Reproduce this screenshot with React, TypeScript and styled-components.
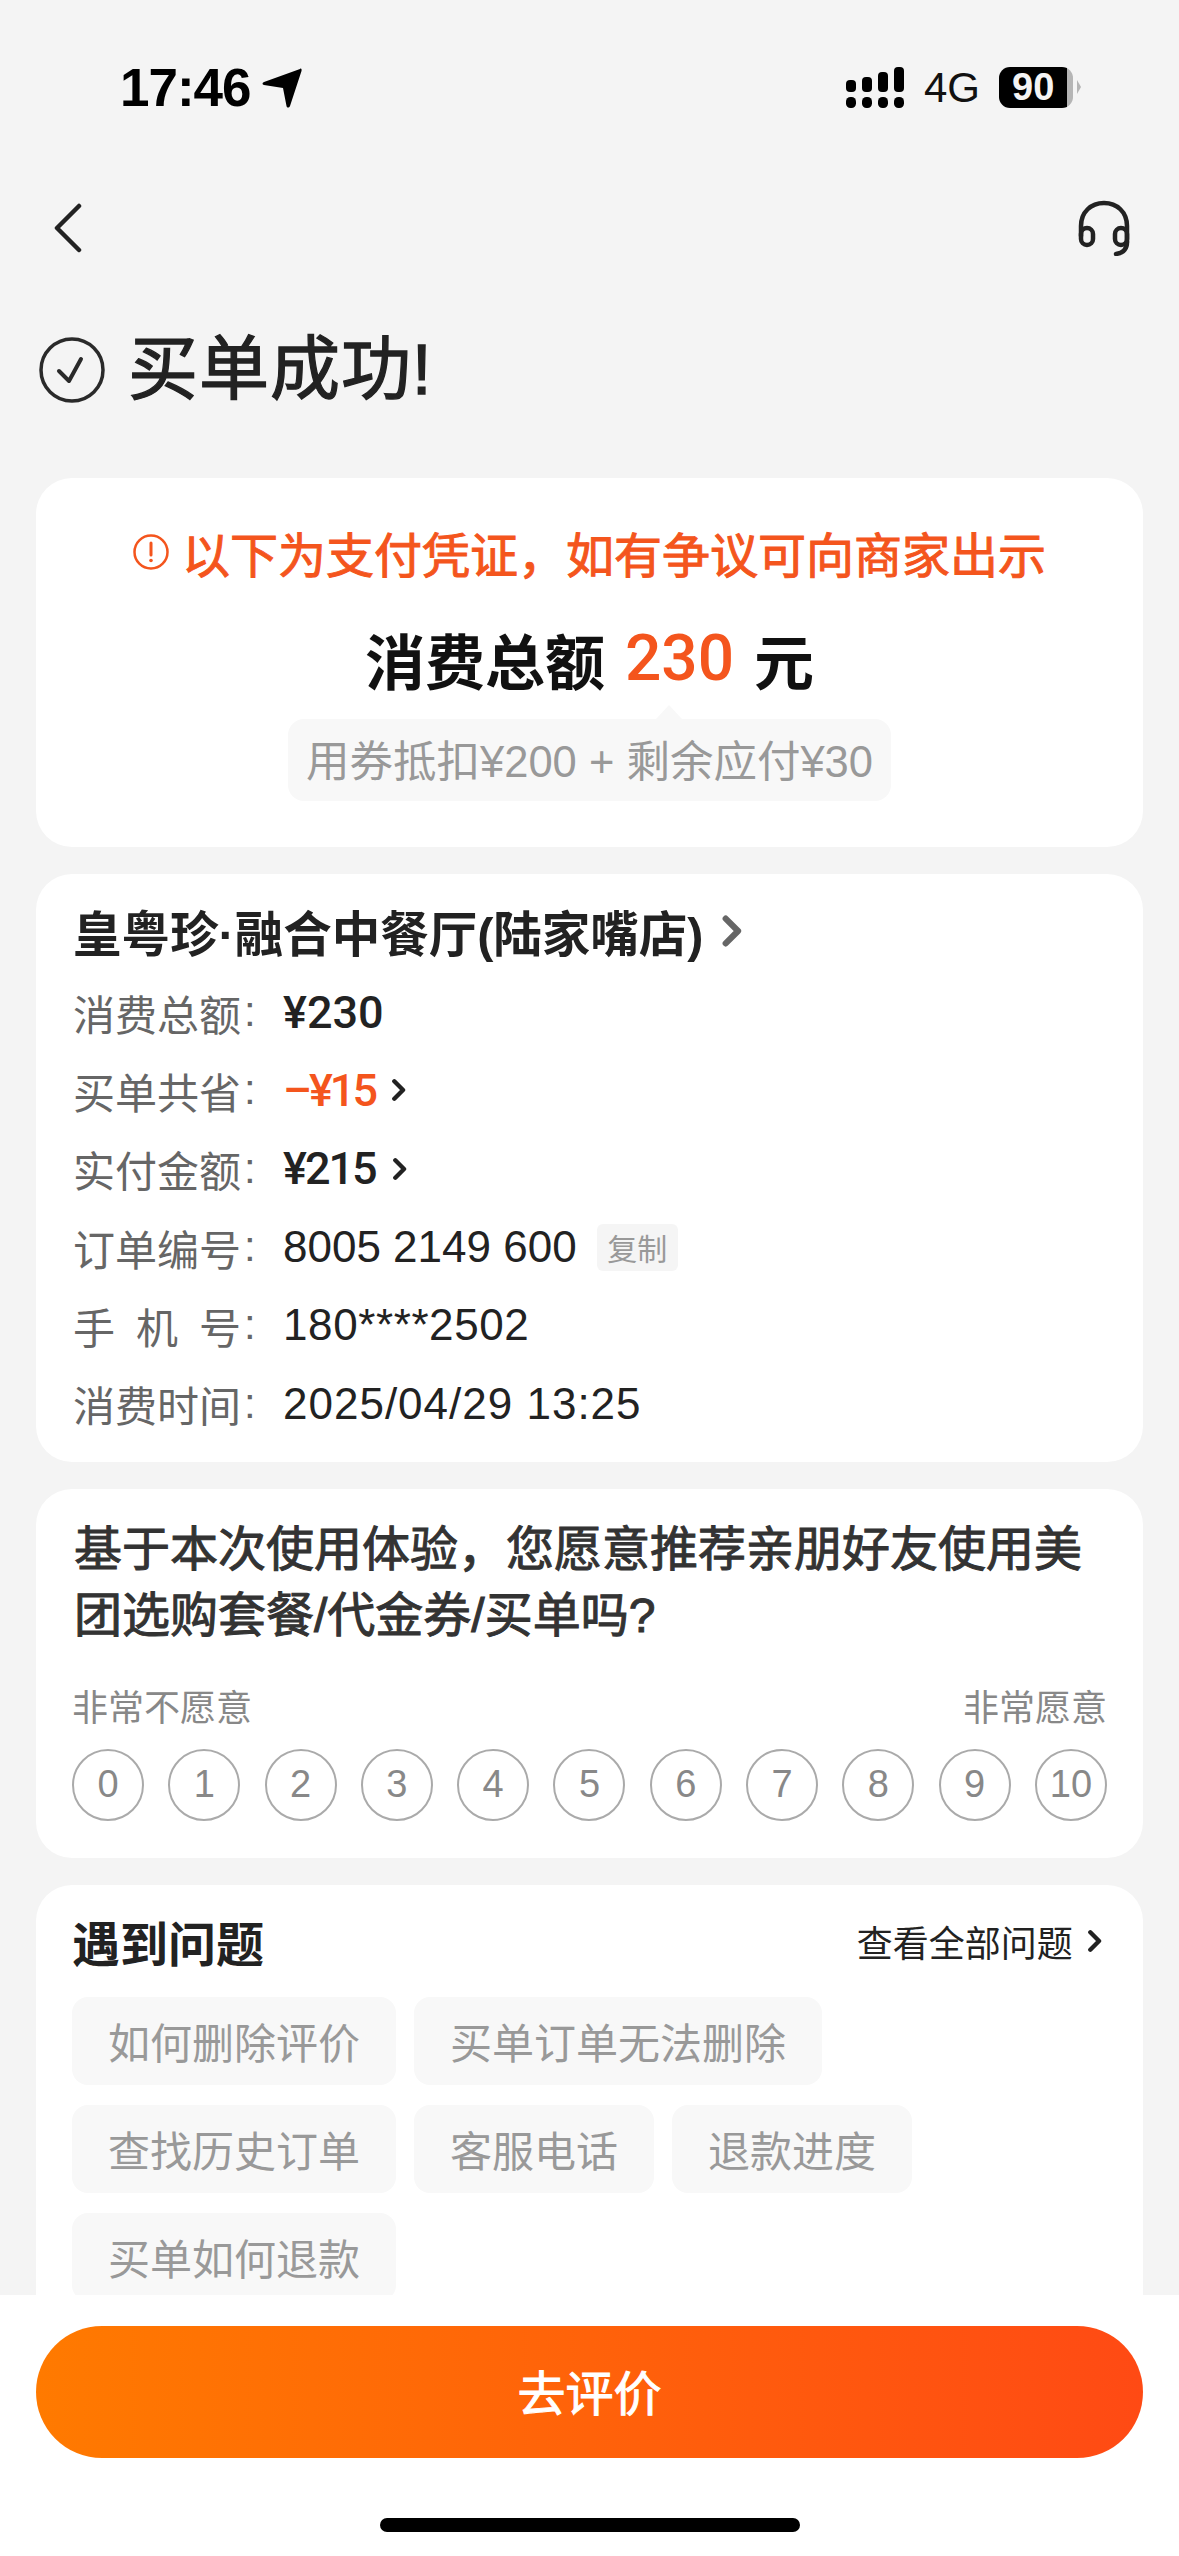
import React from "react";
import styled, { createGlobalStyle } from "styled-components";

const FONT = `"Liberation Sans", "Noto Sans CJK SC", sans-serif`;
const MEDIUM_FONT = `Roboto, "Noto Sans CJK SC", sans-serif`;
const ORANGE = "#f4551d";

const GlobalStyle = createGlobalStyle`
  html, body {
    margin: 0;
    padding: 0;
    background: #f4f4f4;
    font-family: ${FONT};
  }
  * {
    box-sizing: border-box;
  }
`;

const Page = styled.div`
  position: relative;
  width: 1179px;
  height: 2556px;
  overflow: hidden;
  background: #f4f4f4;
  color: #222;
`;

const StatusBar = styled.div`
  display: flex;
  align-items: center;
  justify-content: space-between;
  height: 41px;
  margin-top: 67px;
  padding: 0 106px 0 120px;
`;

const StatusGroup = styled.div`
  display: flex;
  align-items: center;
`;

const Clock = styled.span`
  font-size: 53px;
  font-weight: 700;
  line-height: 41px;
  color: #000;
  letter-spacing: -1px;
`;

const Network = styled.span`
  margin: 0 19px 0 20px;
  font-size: 42px;
  line-height: 41px;
  color: #111;
`;

const Battery = styled.div`
  position: relative;
  width: 74px;
  height: 41px;
  border-radius: 11px;
  background: linear-gradient(90deg, #000 92%, #b5b5b5 92%);
  color: #f4f4f4;
  font-size: 38px;
  font-weight: 700;
  line-height: 41px;
  padding-left: 13px;

  &::after {
    content: "";
    position: absolute;
    right: -8px;
    top: 13px;
    border-left: 4px solid #b5b5b5;
    border-top: 7px solid transparent;
    border-bottom: 7px solid transparent;
  }
`;

const NavBar = styled.div`
  display: flex;
  align-items: center;
  justify-content: space-between;
  height: 60px;
  margin-top: 90px;
  padding: 0 49px 0 54px;
`;

const TitleRow = styled.div`
  display: flex;
  align-items: center;
  gap: 23px;
  height: 80px;
  margin-top: 72px;
  padding-left: 39px;
`;

const Title = styled.h1`
  margin: 0;
  font-size: 70px;
  font-weight: 400;
  line-height: 80px;
  letter-spacing: 1px;
  color: #222;
  -webkit-text-stroke: 1.3px #222;
`;

const Cards = styled.div`
  display: flex;
  flex-direction: column;
  gap: 27px;
  margin-top: 68px;
  padding: 0 36px;
`;

const Card = styled.section`
  background: #fff;
  border-radius: 36px;
`;

const ProofCard = styled(Card)`
  display: flex;
  flex-direction: column;
  align-items: center;
  height: 369px;
  padding-top: 48px;
`;

const Notice = styled.div`
  display: flex;
  align-items: center;
  gap: 13px;
  height: 52px;
  font-size: 48px;
  font-weight: 400;
  color: ${ORANGE};
  -webkit-text-stroke: 1px ${ORANGE};
`;

const Total = styled.div`
  display: flex;
  align-items: center;
  gap: 20px;
  height: 80px;
  margin-top: 40px;
  font-size: 60px;
  font-weight: 700;
  color: #111;
`;

const TotalAmount = styled.span`
  color: ${ORANGE};
  font-family: ${MEDIUM_FONT};
  font-size: 64px;
  font-weight: 500;
`;

const Breakdown = styled.div`
  position: relative;
  display: flex;
  align-items: center;
  height: 82px;
  margin-top: 21px;
  padding: 0 18px 3px;
  border-radius: 16px;
  background: #f8f8f8;
  font-size: 43.5px;
  color: #999;

  &::before {
    content: "";
    position: absolute;
    top: -14px;
    left: 368px;
    border-bottom: 14px solid #f8f8f8;
    border-left: 13px solid transparent;
    border-right: 13px solid transparent;
  }
`;

const OrderCard = styled(Card)`
  padding: 24px 36px 19px;
`;

const ShopName = styled.div`
  display: flex;
  align-items: center;
  gap: 18px;
  height: 66px;
  margin-bottom: 9px;
  padding-left: 1px;
  font-size: 48.5px;
  font-weight: 700;
  color: #222;
`;

const InfoRow = styled.div`
  display: flex;
  align-items: center;
  height: 78.3px;
  padding-left: 1px;
`;

const InfoLabel = styled.span`
  width: 168px;
  font-size: 42px;
  color: #666;
  white-space: nowrap;
  text-align-last: justify;
`;

const InfoColon = styled.span`
  width: 42px;
  padding-left: 3px;
  font-size: 42px;
  color: #666;
`;

const InfoValue = styled.span<{ $track?: number }>`
  font-size: 44px;
  color: #222;
  letter-spacing: ${p => p.$track ?? 0}px;
`;

const StrongValue = styled.span<{ $accent?: boolean; $track?: number }>`
  font-family: ${MEDIUM_FONT};
  font-size: 45px;
  font-weight: 500;
  color: ${p => (p.$accent ? ORANGE : "#222")};
  letter-spacing: ${p => p.$track ?? 0}px;
`;

const RowChevron = styled.span`
  display: flex;
  margin-left: 16px;
`;

const CopyTag = styled.span`
  display: flex;
  align-items: center;
  justify-content: center;
  width: 81px;
  height: 47px;
  margin-left: 20px;
  border-radius: 6px;
  background: #f5f5f5;
  font-size: 30px;
  color: #999;
`;

const SurveyCard = styled(Card)`
  height: 369px;
  padding: 28px 36px 0;
`;

const Question = styled.div`
  padding: 0 2px;
  font-size: 48px;
  font-weight: 400;
  line-height: 66px;
  color: #333;
  -webkit-text-stroke: 1px #333;
`;

const ScaleLabels = styled.div`
  display: flex;
  justify-content: space-between;
  margin-top: 35px;
  font-size: 36px;
  line-height: 50px;
  color: #888;
`;

const ScaleRow = styled.div`
  display: flex;
  justify-content: space-between;
  margin-top: 15px;
`;

const ScaleDot = styled.div`
  display: flex;
  align-items: center;
  justify-content: center;
  width: 72px;
  height: 72px;
  border: 2.5px solid #aaa;
  border-radius: 50%;
  font-size: 38px;
  color: #888;
`;

const HelpCard = styled(Card)`
  height: 500px;
  padding: 26px 36px 0;
`;

const HelpHeader = styled.div`
  display: flex;
  align-items: center;
  justify-content: space-between;
  height: 60px;
`;

const HelpTitle = styled.h2`
  margin: 0;
  font-size: 48px;
  font-weight: 700;
  color: #222;
`;

const AllLink = styled.div`
  display: flex;
  align-items: center;
  gap: 14px;
  padding-right: 5px;
  font-size: 36px;
  color: #222;
`;

const Topics = styled.div`
  display: flex;
  flex-direction: column;
  gap: 20px;
  margin-top: 26px;
`;

const TopicRow = styled.div`
  display: flex;
  gap: 18px;
`;

const Topic = styled.div`
  display: flex;
  align-items: center;
  height: 88px;
  padding: 0 36px;
  border-radius: 16px;
  background: #f8f8f8;
  font-size: 42px;
  color: #999;
`;

const BottomBar = styled.div`
  position: absolute;
  left: 0;
  right: 0;
  bottom: 0;
  height: 261px;
  padding: 31px 36px 0;
  background: #fff;
`;

const ReviewButton = styled.button`
  display: block;
  width: 100%;
  height: 132px;
  padding: 0 0 4px;
  border: 0;
  border-radius: 66px;
  background: linear-gradient(90deg, #ff7a00 0%, #ff4a14 100%);
  color: #fff;
  font-family: ${FONT};
  font-size: 48px;
  font-weight: 400;
  -webkit-text-stroke: 1px #fff;
`;

const HomeIndicator = styled.div`
  width: 420px;
  height: 14px;
  margin: 60px auto 0;
  border-radius: 7px;
  background: #000;
`;

const LocationIcon = () => (
  <svg width="40" height="40" viewBox="0 0 40 40" style={{ marginLeft: 11 }}>
    <path d="M38 1 C39 0 40 1 39.5 3 L28 38 C27 40 25 40 24.5 38 L21 20 L2 17 C0 16.500 0 15 2 14 Z" fill="#000" />
  </svg>
);

const SignalIcon = () => (
  <svg width="58" height="41" viewBox="0 0 58 41" fill="#000">
    <rect x="0" y="13" width="10" height="12" rx="4" />
    <rect x="16" y="10" width="10" height="15" rx="4" />
    <rect x="32" y="5" width="10" height="20" rx="4" />
    <rect x="48" y="0" width="10" height="25" rx="4" />
    <rect x="0" y="30" width="10" height="11" rx="4.500" />
    <rect x="16" y="30" width="10" height="11" rx="4.500" />
    <rect x="32" y="30" width="10" height="11" rx="4.500" />
    <rect x="48" y="30" width="10" height="11" rx="4.500" />
  </svg>
);

const BackIcon = () => (
  <svg width="28" height="50" viewBox="0 0 28 50" fill="none" stroke="#222" strokeWidth="4.500" strokeLinecap="round" strokeLinejoin="round">
    <path d="M25 3 L3 25 L25 47" />
  </svg>
);

const HeadsetIcon = () => (
  <svg width="52" height="56" viewBox="0 0 52 56" fill="none" stroke="#222" strokeWidth="4.500" strokeLinecap="round">
    <path d="M3 36 V26 C3 12 13 3 26 3 C39 3 49 12 49 26 V42" />
    <rect x="3" y="28" width="12" height="17" rx="6" />
    <rect x="37" y="28" width="12" height="17" rx="6" />
    <path d="M49 42 C49 49 45 53 38 54" />
  </svg>
);

const SuccessIcon = () => (
  <svg width="66" height="66" viewBox="0 0 66 66" fill="none" stroke="#2a2a2a" strokeLinecap="round" strokeLinejoin="round">
    <circle cx="33" cy="33" r="31" strokeWidth="3.500" />
    <path d="M20 34 L30 44 L42 22" strokeWidth="4" />
  </svg>
);

const NoticeIcon = () => (
  <svg width="36" height="36" viewBox="0 0 36 36" fill="none" stroke={ORANGE} strokeWidth="2.500">
    <circle cx="18" cy="18" r="16.500" />
    <path d="M18 9 V21" strokeLinecap="round" strokeWidth="3" />
    <circle cx="18" cy="26.500" r="1.800" fill={ORANGE} stroke="none" />
  </svg>
);

const Chevron = ({ color = "#222", size = 24, weight = 4 }: { color?: string; size?: number; weight?: number }) => (
  <svg width={size * 0.64} height={size} viewBox="0 0 14 22" fill="none" stroke={color} strokeWidth={weight} strokeLinecap="round" strokeLinejoin="round">
    <path d="M3 3 L11 11 L3 19" />
  </svg>
);

const SCORES = [0, 1, 2, 3, 4, 5, 6, 7, 8, 9, 10];

const TOPIC_ROWS = [
  ["如何删除评价", "买单订单无法删除"],
  ["查找历史订单", "客服电话", "退款进度"],
  ["买单如何退款"],
];

export default function App() {
  return (
    <Page>
      <GlobalStyle />
      <StatusBar>
        <StatusGroup>
          <Clock>17:46</Clock>
          <LocationIcon />
        </StatusGroup>
        <StatusGroup>
          <SignalIcon />
          <Network>4G</Network>
          <Battery>90</Battery>
        </StatusGroup>
      </StatusBar>

      <NavBar>
        <BackIcon />
        <HeadsetIcon />
      </NavBar>

      <TitleRow>
        <SuccessIcon />
        <Title>买单成功!</Title>
      </TitleRow>

      <Cards>
        <ProofCard>
          <Notice>
            <NoticeIcon />
            以下为支付凭证，如有争议可向商家出示
          </Notice>
          <Total>
            消费总额
            <TotalAmount>230</TotalAmount>
            元
          </Total>
          <Breakdown>用券抵扣¥200 + 剩余应付¥30</Breakdown>
        </ProofCard>

        <OrderCard>
          <ShopName>
            皇粤珍·融合中餐厅(陆家嘴店)
            <Chevron color="#666" size={34} weight={4} />
          </ShopName>
          <InfoRow>
            <InfoLabel>消费总额</InfoLabel>
            <InfoColon>:</InfoColon>
            <StrongValue>¥230</StrongValue>
          </InfoRow>
          <InfoRow>
            <InfoLabel>买单共省</InfoLabel>
            <InfoColon>:</InfoColon>
            <StrongValue $accent $track={-3}>–¥15</StrongValue>
            <RowChevron><Chevron /></RowChevron>
          </InfoRow>
          <InfoRow>
            <InfoLabel>实付金额</InfoLabel>
            <InfoColon>:</InfoColon>
            <StrongValue $track={-2}>¥215</StrongValue>
            <RowChevron><Chevron /></RowChevron>
          </InfoRow>
          <InfoRow>
            <InfoLabel>订单编号</InfoLabel>
            <InfoColon>:</InfoColon>
            <InfoValue>8005 2149 600</InfoValue>
            <CopyTag>复制</CopyTag>
          </InfoRow>
          <InfoRow>
            <InfoLabel>手 机 号</InfoLabel>
            <InfoColon>:</InfoColon>
            <InfoValue $track={0.6}>180****2502</InfoValue>
          </InfoRow>
          <InfoRow>
            <InfoLabel>消费时间</InfoLabel>
            <InfoColon>:</InfoColon>
            <InfoValue $track={1}>2025/04/29 13:25</InfoValue>
          </InfoRow>
        </OrderCard>

        <SurveyCard>
          <Question>基于本次使用体验，您愿意推荐亲朋好友使用美团选购套餐/代金券/买单吗?</Question>
          <ScaleLabels>
            <span>非常不愿意</span>
            <span>非常愿意</span>
          </ScaleLabels>
          <ScaleRow>
            {SCORES.map(score => (
              <ScaleDot key={score}>{score}</ScaleDot>
            ))}
          </ScaleRow>
        </SurveyCard>

        <HelpCard>
          <HelpHeader>
            <HelpTitle>遇到问题</HelpTitle>
            <AllLink>
              查看全部问题
              <Chevron />
            </AllLink>
          </HelpHeader>
          <Topics>
            {TOPIC_ROWS.map(row => (
              <TopicRow key={row[0]}>
                {row.map(topic => (
                  <Topic key={topic}>{topic}</Topic>
                ))}
              </TopicRow>
            ))}
          </Topics>
        </HelpCard>
      </Cards>

      <BottomBar>
        <ReviewButton>去评价</ReviewButton>
        <HomeIndicator />
      </BottomBar>
    </Page>
  );
}
